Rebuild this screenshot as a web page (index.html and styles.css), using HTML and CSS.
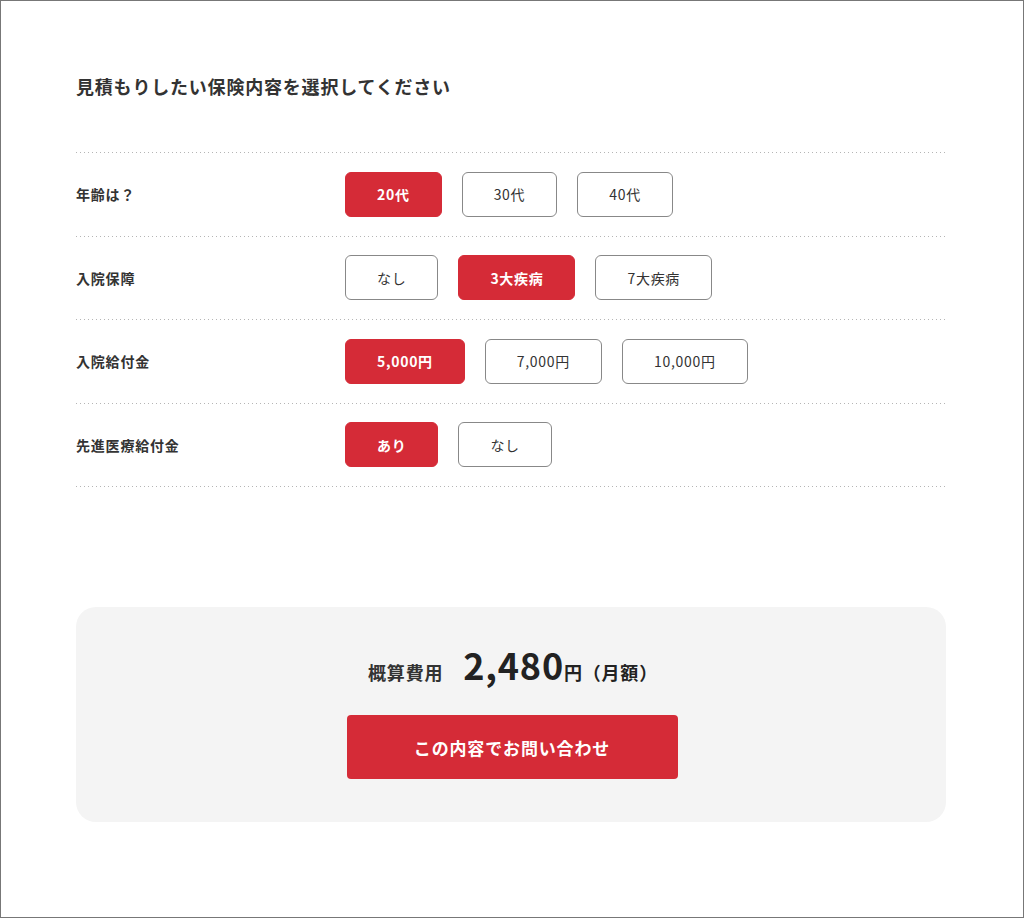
FILE: index.html
```html
<!DOCTYPE html>
<html lang="ja">
<head>
  <meta charset="UTF-8" />
  <meta name="viewport" content="width=device-width, initial-scale=1.0"/>
  <title>見積もり</title>
  <link rel="stylesheet" href="styles.css">
</head>
<body>
  <div class="page">
    <h1 class="title">見積もりしたい保険内容を選択してください</h1>

    <div class="options">
      <div class="row">
        <div class="label">年齢は？</div>
        <div class="choices">
          <button class="choice selected">20代</button>
          <button class="choice">30代</button>
          <button class="choice">40代</button>
        </div>
      </div>
      <div class="row">
        <div class="label">入院保障</div>
        <div class="choices">
          <button class="choice">なし</button>
          <button class="choice selected">3大疾病</button>
          <button class="choice">7大疾病</button>
        </div>
      </div>
      <div class="row">
        <div class="label">入院給付金</div>
        <div class="choices">
          <button class="choice selected">5,000円</button>
          <button class="choice">7,000円</button>
          <button class="choice">10,000円</button>
        </div>
      </div>
      <div class="row last">
        <div class="label">先進医療給付金</div>
        <div class="choices">
          <button class="choice selected">あり</button>
          <button class="choice">なし</button>
        </div>
      </div>
    </div>

    <div class="summary">
      <div class="price">
        <span class="price-label">概算費用</span>
        <span class="price-value">2,480</span>
        <span class="price-unit">円（月額）</span>
      </div>
      <button class="contact">この内容でお問い合わせ</button>
    </div>
  </div>
</body>
</html>
```

FILE: styles.css
```css
* { box-sizing: border-box; margin: 0; padding: 0; }
body {
  font-family: "Noto Sans CJK JP", "Noto Sans", sans-serif;
  background-color: #fff;
  color: #333;
  letter-spacing: 0.05em;
}
.page {
  width: 1024px;
  height: 918px;
  border: 1px solid #777;
  padding: 72px 77px 0 75px;
}
.title {
  font-size: 18px;
  font-weight: bold;
  line-height: 27px;
  color: #333;
  margin-bottom: 52px;
}
.row {
  display: flex;
  align-items: center;
  padding: 19.75px 0 18.75px;
  background-image: linear-gradient(to right, #b5b5b5 1px, transparent 1px);
  background-size: 4px 1px;
  background-repeat: repeat-x;
  background-position: 0 0;
}
.row.last {
  background-image:
    linear-gradient(to right, #b5b5b5 1px, transparent 1px),
    linear-gradient(to right, #b5b5b5 1px, transparent 1px);
  background-size: 4px 1px, 4px 1px;
  background-position: 0 0, 0 100%;
  padding-bottom: 19.75px;
}
.label {
  width: 269px;
  font-size: 14px;
  font-weight: bold;
  color: #333;
}
.choices {
  display: flex;
  gap: 20px;
}
.choice {
  height: 45px;
  padding: 0 31px;
  font-family: inherit;
  font-size: 14px;
  letter-spacing: 0.05em;
  color: #333;
  background-color: #fff;
  border: 1px solid #888;
  border-radius: 6px;
  cursor: pointer;
}
.choice.selected {
  background-color: #d52b37;
  border-color: #d52b37;
  color: #fff;
  font-weight: bold;
}
.summary {
  margin-top: 120px;
  background-color: #f4f4f4;
  border-radius: 20px;
  padding: 36px 0 43px;
  display: flex;
  flex-direction: column;
  align-items: center;
}
.price {
  display: flex;
  align-items: baseline;
  line-height: 43px;
  color: #222;
  font-weight: bold;
  padding-left: 4px;
}
.price-label {
  font-size: 18px;
  margin-right: 20px;
  color: #333;
}
.price-value {
  font-size: 36px;
}
.price-unit {
  font-size: 18px;
}
.contact {
  margin-top: 21px;
  margin-left: 2px;
  width: 331px;
  height: 64px;
  background-color: #d52b37;
  color: #fff;
  border: none;
  border-radius: 4px;
  font-family: inherit;
  font-size: 17px;
  font-weight: bold;
  letter-spacing: 0.05em;
  cursor: pointer;
}
```
